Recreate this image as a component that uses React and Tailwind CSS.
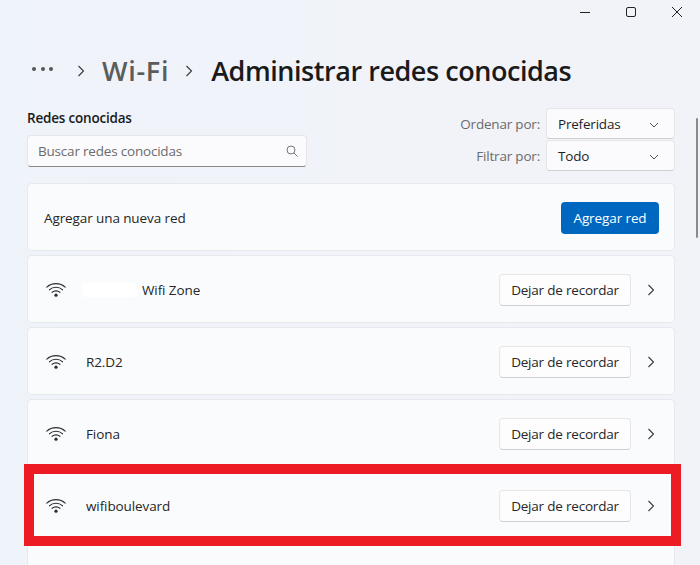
const font = "font-['Open_Sans',sans-serif]";

const WifiIcon = () => (
  <svg width="20" height="16" viewBox="0 0 20 16" fill="none" stroke="#2b2b2b" strokeWidth="1.1" strokeLinecap="round">
    <path d="M0.8 5.2C5.8 0.4 14.2 0.4 19.2 5.2" />
    <path d="M3.4 7.8C7 4.4 13 4.4 16.6 7.8" />
    <path d="M6 10.4C8.2 8.4 11.8 8.4 14 10.4" />
    <circle cx="10" cy="13.2" r="1.6" fill="#2b2b2b" stroke="none" />
  </svg>
);

const Chevron = ({ className = "" }) => (
  <svg width="8" height="12" viewBox="0 0 8 12" fill="none" stroke="#3a3a3a" strokeWidth="1.1" className={className}>
    <path d="M1.5 1L6.5 6L1.5 11" />
  </svg>
);

const ChevronDown = () => (
  <svg width="10" height="6" viewBox="0 0 10 6" fill="none" stroke="#555" strokeWidth="1">
    <path d="M1 1L5 5L9 1" />
  </svg>
);

const Dropdown = ({ label, value }) => (
  <div className="flex items-center justify-end gap-[6px]">
    <span className="pt-[2px] text-[13.5px] text-[#6b6b6b] tracking-[-0.2px]">{label}</span>
    <div className="flex h-[31px] w-[129px] items-center justify-between rounded-[4px] border border-[#e6e6e8] border-b-[#cfcfd2] bg-[#fbfbfd] pl-[11px] pr-[15px] pt-[2px] text-[13.5px] text-[#1f1f1f] tracking-[-0.2px]">
      {value}
      <ChevronDown />
    </div>
  </div>
);

const Network = ({ name, hidden }) => (
  <div className="flex h-[68px] shrink-0 items-center rounded-[4px] border border-[#e8e9ec] bg-[#fafbfd] pl-[18px] pr-[18px] pt-[2px]">
    <WifiIcon />
    <div className="ml-[20px] flex flex-1 items-center text-[13.5px] text-[#262626] tracking-[-0.1px]">
      {hidden && <span className="mr-[1px] h-[14px] w-[55px] -translate-x-[4px] rounded-[3px] bg-white" />}
      {name}
    </div>
    <div className="flex h-[32px] w-[132px] items-center justify-center rounded-[4px] border border-[#e6e6e8] border-b-[#cfcfd2] bg-[#fdfdfe] text-[13.5px] text-[#262626] tracking-[-0.2px]">
      Dejar de recordar
    </div>
    <Chevron className="ml-[16px] mr-[1px]" />
  </div>
);

export default function App() {
  return (
    <div className={`relative flex h-[565px] w-[700px] flex-col overflow-hidden bg-gradient-to-r from-[#eff3fa] to-[#f2f3f8] ${font}`}>
      <div className="flex h-[24px] shrink-0 items-center justify-end gap-[36px] pr-[18px]">
        <div className="h-px w-[10px] bg-[#222]" />
        <div className="h-[10px] w-[10px] rounded-[2px] border border-[#222]" />
        <svg width="10" height="10" viewBox="0 0 10 10" stroke="#222" strokeWidth="1">
          <path d="M0 0L10 10M10 0L0 10" />
        </svg>
      </div>

      <div className="mt-[24px] flex h-[46px] shrink-0 items-center pl-[32px]">
        <div className="mb-[5px] flex gap-[4.5px]">
          <span className="h-[4px] w-[4px] rounded-full bg-[#555]" />
          <span className="h-[4px] w-[4px] rounded-full bg-[#555]" />
          <span className="h-[4px] w-[4px] rounded-full bg-[#555]" />
        </div>
        <Chevron className="ml-[24px]" />
        <span className="ml-[17px] text-[27px] font-semibold text-[#5c5c5c] tracking-[0.7px]">Wi-Fi</span>
        <Chevron className="ml-[16px]" />
        <span className="ml-[18px] text-[27px] font-semibold text-[#1a1a1a] tracking-[-0.45px]">Administrar redes conocidas</span>
      </div>

      <div className="mt-[14px] flex shrink-0 items-start justify-between pl-[27px] pr-[25px]">
        <div>
          <div className="text-[13.5px] font-semibold leading-[20px] text-[#1a1a1a] tracking-[-0.2px]">Redes conocidas</div>
          <div className="mt-[7px] flex h-[32px] w-[280px] items-center justify-between rounded-[4px] border border-[#e6e6e8] border-b-[#8a8a8a] bg-[#fbfbfd] pl-[10px] pr-[8px] text-[13.5px] text-[#6b6b6b] tracking-[-0.2px]">
            Buscar redes conocidas
            <svg width="12" height="12" viewBox="0 0 12 12" fill="none" stroke="#777" strokeWidth="1">
              <circle cx="5" cy="5" r="4" />
              <path d="M8 8L11.5 11.5" />
            </svg>
          </div>
        </div>
        <div className="flex flex-col gap-[1px]">
          <Dropdown label="Ordenar por:" value="Preferidas" />
          <Dropdown label="Filtrar por:" value="Todo" />
        </div>
      </div>

      <div className="mt-[12px] flex shrink-0 flex-col gap-[4px] pl-[27px] pr-[25px]">
        <div className="flex h-[68px] shrink-0 items-center justify-between rounded-[4px] border border-[#e8e9ec] bg-[#fafbfd] pl-[16px] pr-[15px] pt-[2px]">
          <span className="text-[13.5px] text-[#262626] tracking-[-0.1px]">Agregar una nueva red</span>
          <div className="flex h-[32px] w-[98px] items-center justify-center rounded-[4px] bg-[#0067c0] text-[13.5px] text-white tracking-[-0.1px]">
            Agregar red
          </div>
        </div>
        <Network name="Wifi Zone" hidden />
        <Network name="R2.D2" />
        <Network name="Fiona" />
        <Network name="wifiboulevard" />
        <div className="h-[68px] shrink-0 rounded-[4px] border border-[#e8e9ec] bg-[#fafbfd]" />
      </div>

      <div className="absolute left-[696px] top-[118px] h-[120px] w-[2px] rounded-full bg-[#8a8a8a]" />
      <div className="absolute left-[24px] top-[464px] h-[82px] w-[657px] border-[10px] border-[#ed1c24]" />
    </div>
  );
}
